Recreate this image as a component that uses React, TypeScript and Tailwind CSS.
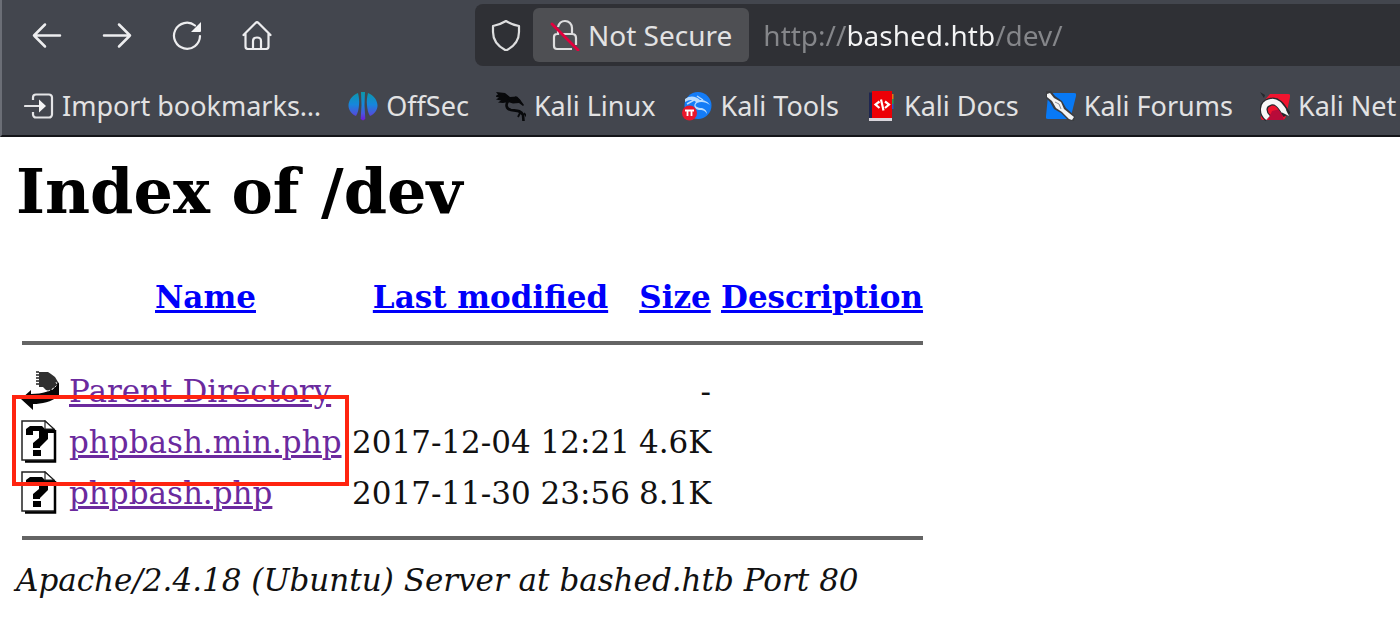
import type {ReactNode} from 'react';

const bookmarks: {name: string; icon: ReactNode}[] = [
    {name: 'Import bookmarks…', icon: <ImportIcon />},
    {name: 'OffSec', icon: <OffSecIcon />},
    {name: 'Kali Linux', icon: <KaliLinuxIcon />},
    {name: 'Kali Tools', icon: <KaliToolsIcon />},
    {name: 'Kali Docs', icon: <KaliDocsIcon />},
    {name: 'Kali Forums', icon: <KaliForumsIcon />},
    {name: 'Kali Net', icon: <NetHunterIcon />},
];

const files = [
    {name: 'Parent Directory', modified: '', size: '-', icon: <BackFileIcon />},
    {name: 'phpbash.min.php', modified: '2017-12-04 12:21', size: '4.6K', icon: <UnknownFileIcon />},
    {name: 'phpbash.php', modified: '2017-11-30 23:56', size: '8.1K', icon: <UnknownFileIcon />},
];

function Icon({children}: {children: ReactNode}) {
    return (
        <svg viewBox="0 0 30 30" className="h-[30px] w-[30px] shrink-0" fill="none" aria-hidden="true">
            {children}
        </svg>
    );
}

function ImportIcon() {
    return (
        <Icon>
            <path d="M9 9V6.5a3 3 0 0 1 3-3h13a3 3 0 0 1 3 3v17a3 3 0 0 1-3 3H12a3 3 0 0 1-3-3V21" stroke="#e4e4e6" strokeWidth="2.200" />
            <path d="M1 15h15" stroke="#e4e4e6" strokeWidth="2.200" strokeLinecap="round" />
            <path d="M15 8.500l7 6.500-7 6.500z" fill="#f4f4f5" />
        </Icon>
    );
}

function OffSecIcon() {
    return (
        <Icon>
            <defs>
                <linearGradient id="offsec" x1="0" y1="0" x2="0" y2="30" gradientUnits="userSpaceOnUse">
                    <stop offset="0" stopColor="#0b98a5" />
                    <stop offset=".45" stopColor="#1687dc" />
                    <stop offset=".75" stopColor="#4a55dc" />
                    <stop offset="1" stopColor="#7412d8" />
                </linearGradient>
            </defs>
            <path d="M10 2c1 4 1.500 8 1 12-.3 4-1 8-3 11C3.500 23 .5 19 .5 14.500S4 4 10 2z" fill="url(#offsec)" />
            <path d="M20 2c-1 4-1.500 8-1 12 .3 4 1 8 3 11 4.500-2 7.500-6 7.500-10.500S26 4 20 2z" fill="url(#offsec)" />
            <path d="M13 1h4l-.5 13 .8 14-2.300 1.500-2.300-1.500.8-14z" fill="url(#offsec)" />
        </Icon>
    );
}

function KaliLinuxIcon() {
    return (
        <Icon>
            <path d="M0 1l9 1 5 4 7-.5 3 3 4 5.500-1 1-4-3-6 .5-5-1.500-5 1-5-.5 3-2-5-1 3-2-4-1 3-2z" fill="#08090b" />
            <path d="M13 9c-4 4-3 9 2 10 5 .8 10 0 12 5l.5 6" stroke="#08090b" strokeWidth="2.600" />
            <path d="M22 20l4 3M24 22l-2 4M28 22l3 4M19 6l5 4M9 4l6 5" stroke="#08090b" strokeWidth="1.800" />
        </Icon>
    );
}

function KaliToolsIcon() {
    return (
        <Icon>
            <circle cx="16" cy="14.500" r="13.500" fill="#147cf7" />
            <path d="M3 8c5-4 11-3 15 1 5 0 8 2 10 5-4-3-9-4-13-2-4 3 1 5 5 5 3 1 5 3 5 6-2-4-5-4-8-4-5-1-6-5-3-8-4-3-7-2-11 0z" fill="#b9dcff" />
            <path d="M5 13l7-4M15 5l6 4" stroke="#b9dcff" strokeWidth="1.500" />
            <circle cx="7.500" cy="22" r="7.500" fill="#e8162b" />
            <path d="M3 19.500h9M5.500 19.500v5.500M9.500 19.500v5.500" stroke="#fff" strokeWidth="1.800" />
        </Icon>
    );
}

function KaliDocsIcon() {
    return (
        <Icon>
            <path d="M3 1.500h4V28H3z" fill="#1f2650" />
            <path d="M3 27h23v3H3z" fill="#d9d6dc" />
            <path d="M6 0h20v27H6z" fill="#ec0006" />
            <path d="M26 3h1.500v5H26z" fill="#dd7b16" />
            <path d="M26 8h1.500v5H26z" fill="#2c9a56" />
            <path d="M26 13h1.500v5H26z" fill="#3154c4" />
            <path d="M13.500 10.500l-4 3 4 3.500M19 10.500l4 3-4 3.500M15 8.500l2.500 11" stroke="#fff" strokeWidth="2.200" />
        </Icon>
    );
}

function KaliForumsIcon() {
    return (
        <Icon>
            <path d="M2 2h26q3 0 2 3l-5 20q-1 3-4 3H2q-3 0-2-3L2 5z" fill="#0879f5" />
            <path d="M0 0h5l4 5 7 5 4 7 9 8-1 5-6-1-7-7-7-4-4-7-4-4z" fill="#3b3c40" />
            <path d="M1 3l3-1 4 5 7 4 3 7 10 8-2 3-3-1-7-7-6-4-4-7-5-4z" fill="#f4f4f4" />
            <path d="M9 11l4 2 2 5" stroke="#8b8d92" />
        </Icon>
    );
}

function NetHunterIcon() {
    return (
        <Icon>
            <path d="M10 3h18q3 0 2 3l-4 19q-1 4-4 4H4q-4 0-3-4l3-15z" fill="#f0142f" />
            <path d="M8 29l4-9 8-2 4 11z" fill="#b80b39" />
            <path d="M0 1l5 3-1 3z" fill="#25272c" />
            <path d="M8 27c-6-5-6-14 2-16 7-2 11 3 17 13" stroke="#25272c" strokeWidth="8" />
            <path d="M8 27c-6-5-6-14 2-16 6-2 10 3 14 9" stroke="#f7f7f7" strokeWidth="5.500" />
            <path d="M20 14l6 5 3 6-8-4z" fill="#f7f7f7" />
        </Icon>
    );
}

function BackFileIcon() {
    return (
        <svg viewBox="0 0 39 43" className="block h-[43px] w-[39px]" aria-hidden="true">
            <path d="M18 3h9l3 2 4 3 3 5v4l-5 2-3 3-4-1-3-3h-4z" fill="#303030" />
            <path d="M15 3h3M15 6h3M15 9h3M15 12h3M15 15h3" stroke="#222" strokeWidth="1.500" />
            <path d="M38 13v14c-8 6-17 8-26 8v6L0 30l10-9v4c11 0 22-3 26-9z" fill="#060606" />
            <path d="M35 13l1 3-4 4-5 2" stroke="#ddd" strokeWidth="1" strokeDasharray="2 2" fill="none" />
        </svg>
    );
}

function UnknownFileIcon() {
    return (
        <svg viewBox="0 0 39 43" className="block h-[43px] w-[39px]" aria-hidden="true">
            <path d="M1 1h23l10 10v29H1z" fill="#fff" stroke="#222" strokeWidth="1.500" />
            <path d="M4 41.500h30V10" stroke="#000" strokeWidth="2.500" fill="none" />
            <path d="M5 15V9l4-3h12l3 3h10v4h-7v6l-8 8v1h-7v-5l6-5v-7h-6v4z" fill="#000" />
            <path d="M24 1v8h9z" fill="#fff" stroke="#222" strokeWidth="1.200" />
            <path d="M12 30h8v6h-8z" fill="#000" />
        </svg>
    );
}

const navButton = 'flex h-14 w-[70px] items-center justify-center';

function Toolbar() {
    return (
        <div className="flex items-center pt-1 pl-[10px] text-[28px]">
            <button type="button" aria-label="Back" className={navButton}>
                <Icon>
                    <path d="M28 15.500H2M13 4.500l-11 11 11 11" stroke="#ededef" strokeWidth="2.500" strokeLinecap="round" strokeLinejoin="round" />
                </Icon>
            </button>
            <button type="button" aria-label="Forward" className={navButton}>
                <Icon>
                    <path d="M2 15.500h26M17 4.500l11 11-11 11" stroke="#ededef" strokeWidth="2.500" strokeLinecap="round" strokeLinejoin="round" />
                </Icon>
            </button>
            <button type="button" aria-label="Reload" className={navButton}>
                <Icon>
                    <path d="M28 16A13 13 0 1 1 23 5.500" stroke="#ededef" strokeWidth="2.200" strokeLinecap="round" />
                    <path d="M29 2v9a1 1 0 0 1-1 1h-9z" fill="#f4f4f5" />
                </Icon>
            </button>
            <button type="button" aria-label="Home" className={navButton}>
                <Icon>
                    <path
                        d="M1.500 15L13.500 3q1.500-1.500 3 0L28.500 15M3.500 13v13.500q0 2.500 2.500 2.500h18q2.500 0 2.500-2.500V13M11 29v-8q0-3.500 4-3.500t4 3.500v8"
                        stroke="#ededef"
                        strokeWidth="2.200"
                        strokeLinecap="round"
                        strokeLinejoin="round"
                    />
                </Icon>
            </button>

            <div className="ml-[183px] flex h-[62px] min-w-0 flex-1 items-center rounded-l-lg bg-[#2f3035]">
                <button type="button" aria-label="Tracking protection" className="ml-4 shrink-0">
                    <svg viewBox="0 0 30 32" className="h-8 w-[30px]" fill="none" aria-hidden="true">
                        <path d="M15 2C11 4.500 7 6 2 7v6c0 8 4 14 13 18.500 9-4.500 13-10.500 13-18.500V7C23 6 19 4.500 15 2z" stroke="#dededf" strokeWidth="2.200" strokeLinejoin="round" />
                    </svg>
                </button>
                <button type="button" className="ml-3 flex h-[54px] shrink-0 items-center gap-2 rounded-md bg-[#4e4f53] px-[17px] text-[#e2e2e3]">
                    <svg viewBox="0 0 30 32" className="h-8 w-[30px]" fill="none" aria-hidden="true">
                        <path d="M8 8c1-4 4-6 7-6 4 0 7 3 7 7v6M13 15h9q4 0 4 4v7M22 30H7q-3 0-3-3v-9q0-3 3-3h1v-3" stroke="#dededf" strokeWidth="2.200" />
                        <path d="M2 5l26 26" stroke="#e3003d" strokeWidth="2.800" strokeLinecap="round" />
                    </svg>
                    Not Secure
                </button>
                <input
                    type="text"
                    aria-label="Address"
                    defaultValue="http://bashed.htb/dev/"
                    spellCheck={false}
                    className="ml-[14px] h-full min-w-0 flex-1 bg-[linear-gradient(90deg,#85868a_83px,#f4f4f5_83px,#f4f4f5_231px,#85868a_231px)] bg-clip-text text-transparent outline-none"
                />
            </div>
        </div>
    );
}

export default function App() {
    return (
        <div className="overflow-hidden bg-white">
            <header className="border-b-2 border-l-2 border-b-[#141519] border-l-[#6b6e76] bg-[#43464e] font-['Noto_Sans',sans-serif] text-[27px] leading-10 text-[#e2e2e3]">
                <Toolbar />
                <nav aria-label="Bookmarks" className="flex h-[69px] items-center gap-[27px] pt-[10px] pl-[22px] whitespace-nowrap">
                    {bookmarks.map((bookmark) => (
                        <a key={bookmark.name} href="#" className="flex items-center gap-2">
                            {bookmark.icon}
                            {bookmark.name}
                        </a>
                    ))}
                </nav>
            </header>

            <main className="pt-[19px] font-['DejaVu_Serif',serif] text-[31px] leading-10 text-[#111]">
                <h1 className="ml-4 text-[62px] leading-[72px] font-bold text-black">Index of /dev</h1>

                <div className="relative mt-[46px] ml-[17px] w-max">
                    <table className="w-[911px] table-fixed border-collapse whitespace-nowrap">
                        <colgroup>
                            <col className="w-[47px]" />
                            <col className="w-[283px]" />
                            <col className="w-[287px]" />
                            <col className="w-[82px]" />
                            <col className="w-[212px]" />
                        </colgroup>
                        <thead>
                            <tr className="h-[46px] text-[#0000fa]">
                                <th className="p-0" />
                                {['Name', 'Last modified', 'Size', 'Description'].map((heading) => (
                                    <th key={heading} className="px-[5px] py-0">
                                        <a href="#" className="underline">
                                            {heading}
                                        </a>
                                    </th>
                                ))}
                            </tr>
                            <tr className="h-[45px]">
                                <th colSpan={5} className="px-[5px] py-0">
                                    <hr className="border-t-4 border-[#646464]" />
                                </th>
                            </tr>
                        </thead>
                        <tbody>
                            {files.map((file) => (
                                <tr key={file.name} className="h-[51px]">
                                    <td className="px-1 py-0">{file.icon}</td>
                                    <td className="px-[5px] py-0">
                                        <a href="#" className="text-[#6b2a9e] underline">
                                            {file.name}
                                        </a>
                                    </td>
                                    <td className="px-[5px] py-0">{file.modified}</td>
                                    <td className="px-[5px] py-0 text-right">{file.size}</td>
                                    <td />
                                </tr>
                            ))}
                            <tr className="h-10">
                                <td colSpan={5} className="px-[5px] py-0">
                                    <hr className="border-t-4 border-[#646464]" />
                                </td>
                            </tr>
                        </tbody>
                    </table>

                    {/* Highlight around the web shell */}
                    <div className="pointer-events-none absolute top-[121px] -left-[5px] h-[91px] w-[337px] border-4 border-[#ff2410]" />
                </div>

                <address className="ml-4 pb-6 leading-11">Apache/2.4.18 (Ubuntu) Server at bashed.htb Port 80</address>
            </main>
        </div>
    );
}
